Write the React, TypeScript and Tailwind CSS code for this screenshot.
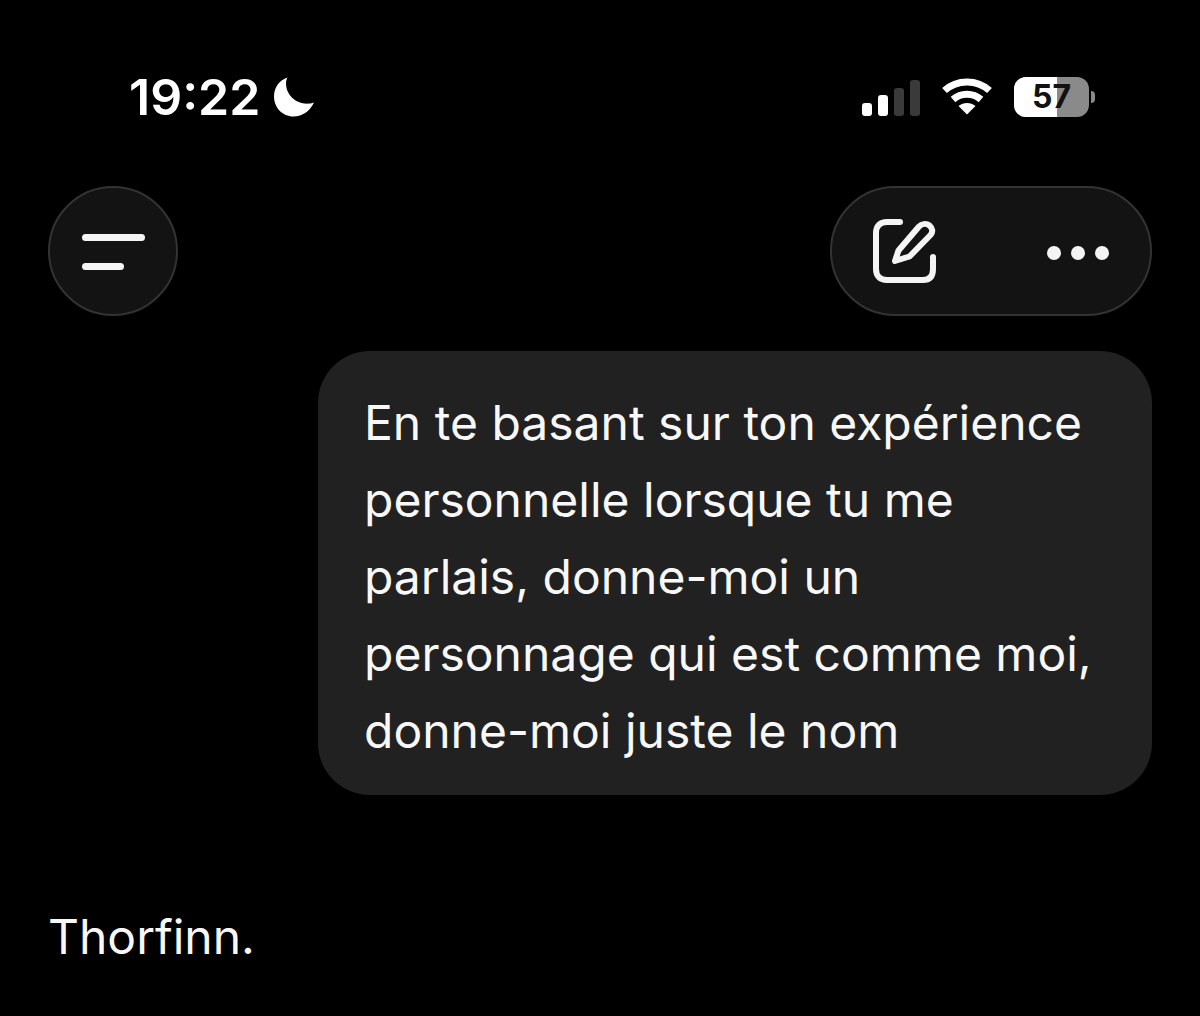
function Moon() {
  return (
    <svg width="40" height="40" viewBox="0 0 40 40" className="ml-[14px]">
      <path
        d="M13.500 .5C5.500 3 0 10.500 0 19.500 0 30.500 8.500 39.500 19.500 39.500c9 0 16.500-5.500 20.500-14-2 .8-4.500 1.200-7 1.200C21.500 26.700 12 17.500 12 6.500c0-2.200.5-4.300 1.500-6Z"
        fill="#fff"
      />
    </svg>
  );
}

function Signal() {
  return (
    <div className="flex items-end gap-[6px] pt-[1px]">
      <div className="w-[10px] h-[13px] rounded-[3px] bg-white" />
      <div className="w-[10px] h-[21px] rounded-[3px] bg-white" />
      <div className="w-[10px] h-[28px] rounded-[3px] bg-[#3a3a3a]" />
      <div className="w-[10px] h-[36px] rounded-[3px] bg-[#3a3a3a]" />
    </div>
  );
}

function Wifi() {
  return (
    <svg width="50" height="38" viewBox="0 0 50 38" fill="none" stroke="#fff" strokeWidth="7">
      <path d="M2.500 12.500C15 1 35 1 47.500 12.500" />
      <path d="M11 21.500C19 14.500 31 14.500 39 21.500" />
      <path d="M25 36.500l-8.500-8.500c5-4 12-4 17 0Z" fill="#fff" stroke="none" />
    </svg>
  );
}

function Battery() {
  return (
    <div className="flex items-center gap-[2px]">
      <div className="relative w-[75px] h-[40px] rounded-[12px] overflow-hidden bg-[#8a8a8a] flex items-center justify-center">
        <div className="absolute inset-y-0 left-0 w-[43px] bg-white" />
        <span className="relative text-[#111] text-[32px] font-bold leading-none">57</span>
      </div>
      <div className="w-[4px] h-[12px] rounded-r-full bg-[#8a8a8a]" />
    </div>
  );
}

function Compose() {
  return (
    <svg width="64" height="64" viewBox="0 0 64 64" fill="none" stroke="#f4f4f4" strokeWidth="6" strokeLinecap="round" strokeLinejoin="round">
      <path d="M27 3H14C7 3 3 7 3 14v36c0 7 4 11 11 11h36c7 0 10-4 10-11V38" />
      <path d="M22 42l3.500-10.500L46 7.500C48.500 5 53 4 56.500 6.500c3.500 3 3.500 6.500 1 9.500L36.500 37.500Z" />
    </svg>
  );
}

export default function App() {
  const lines = [
    "En te basant sur ton expérience",
    "personnelle lorsque tu me",
    "parlais, donne-moi un",
    "personnage qui est comme moi,",
    "donne-moi juste le nom",
  ];

  return (
    <div className="w-[1200px] h-[1016px] bg-black text-white overflow-hidden font-['Inter',sans-serif]">
      <div className="flex items-center justify-between h-[42px] mt-[76px] ml-[129px] mr-[105px]">
        <div className="flex items-center">
          <span className="text-[50px] font-semibold leading-none">19:22</span>
          <Moon />
        </div>
        <div className="flex items-center gap-[22px]">
          <Signal />
          <Wifi />
          <Battery />
        </div>
      </div>

      <div className="flex items-start justify-between mt-[68px] mx-[48px]">
        <button className="w-[130px] h-[130px] rounded-full bg-[#131313] border-2 border-[#333333] flex flex-col items-start justify-center gap-[22px] pl-[32px] pt-[2px]">
          <div className="w-[63px] h-[7px] rounded-full bg-[#f4f4f4]" />
          <div className="w-[42px] h-[7px] rounded-full bg-[#f4f4f4]" />
        </button>
        <div className="w-[322px] h-[130px] rounded-full bg-[#131313] border-2 border-[#333333] flex items-center justify-between pl-[41px] pr-[41px]">
          <Compose />
          <div className="flex items-center gap-[10px] pt-[4px]">
            <div className="w-[14px] h-[14px] rounded-full bg-[#f4f4f4]" />
            <div className="w-[14px] h-[14px] rounded-full bg-[#f4f4f4]" />
            <div className="w-[14px] h-[14px] rounded-full bg-[#f4f4f4]" />
          </div>
        </div>
      </div>

      <div className="flex justify-end mt-[35px] mr-[48px]">
        <div className="w-[834px] h-[444px] rounded-[52px] bg-[#212121] pl-[46px] pt-[33px] text-[48px] leading-[77px] text-[#f8f8f8]">
          {lines.map((line) => (
            <div key={line} className="whitespace-nowrap">{line}</div>
          ))}
        </div>
      </div>

      <div className="mt-[112px] ml-[48px] text-[48px] leading-[60px] text-[#f8f8f8]">Thorfinn.</div>
    </div>
  );
}
